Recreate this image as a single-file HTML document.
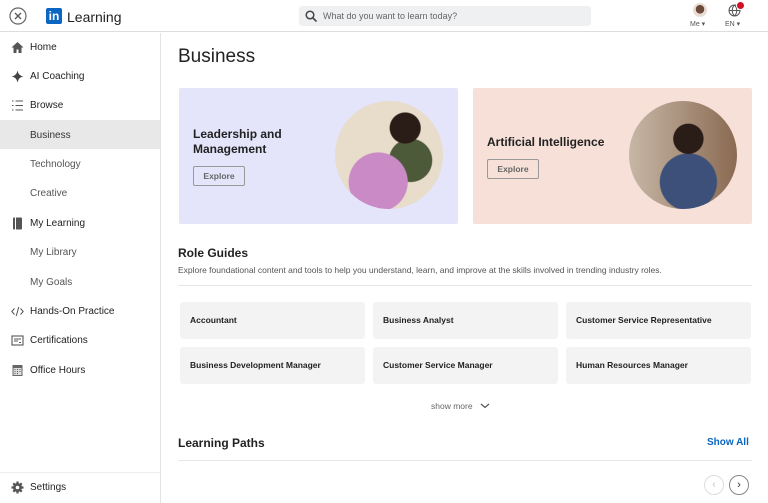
<!DOCTYPE html>
<html><head><meta charset="utf-8"><style>
*{box-sizing:border-box;margin:0;padding:0}
body{width:768px;height:503px;overflow:hidden;background:#fff;font-family:"Liberation Sans",sans-serif;color:#1f1f1f;position:relative}
.abs{position:absolute}
.hdr{left:0;top:0;width:768px;height:32px;border-bottom:1px solid #ddd}
.side{left:0;top:33px;width:161px;height:470px;border-right:1px solid #e3e3e3}
.nav{position:absolute;left:0;width:160px;height:29px;font-size:10px;line-height:31px;padding-left:30px;color:#222}
.nav.sub{color:#555}
.ic{position:absolute;left:11px;top:9px;width:13px;height:13px}
.tile{position:absolute;width:185px;height:37px;background:#f3f3f4;border-radius:3px;font-size:8.5px;font-weight:bold;line-height:37px;padding-left:10px;color:#222}
.btn{position:absolute;border:1px solid #999;border-radius:2px;font-size:8.5px;font-weight:bold;color:#666;text-align:center;line-height:18px;width:52px;height:20px}
</style></head><body>
<div class="abs hdr">
<svg class="abs" style="left:9px;top:7px" width="18" height="18" viewBox="0 0 18 18"><circle cx="9" cy="9" r="8" fill="none" stroke="#666" stroke-width="1.2"/><path d="M6 6l6 6M12 6l-6 6" stroke="#555" stroke-width="1.3"/></svg>
<div class="abs" style="left:46px;top:8px;width:16px;height:16px;background:#0a66c2;border-radius:2px;color:#fff;font-weight:bold;font-size:12px;line-height:17px;text-align:center">in</div>
<div class="abs" style="left:67px;top:9px;font-size:14px;color:#222">Learning</div>
<div class="abs" style="left:299px;top:6px;width:292px;height:20px;background:#eef0f2;border-radius:3px"></div>
<svg class="abs" style="left:305px;top:10px" width="12" height="12" viewBox="0 0 12 12"><circle cx="5" cy="5" r="3.8" fill="none" stroke="#444" stroke-width="1.5"/><path d="M8 8l3.5 3.5" stroke="#444" stroke-width="1.6"/></svg>
<div class="abs" style="left:323px;top:11px;font-size:9px;color:#666">What do you want to learn today?</div>
<div class="abs" style="left:693px;top:3px;width:14px;height:14px;border-radius:50%;background:radial-gradient(circle at 50% 45%,#6b4a3a 40%,#e9dcd3 42%)"></div>
<div class="abs" style="left:690px;top:20px;font-size:7px;color:#555">Me ▾</div>
<svg class="abs" style="left:728px;top:4px" width="13" height="13" viewBox="0 0 13 13"><circle cx="6.5" cy="6.5" r="5.5" fill="none" stroke="#555"/><path d="M1 6.5h11M6.5 1c-3 3-3 8 0 11M6.5 1c3 3 3 8 0 11" stroke="#555" fill="none"/></svg>
<div class="abs" style="left:736px;top:1px;width:9px;height:9px;border-radius:50%;background:#d11124;border:1px solid #fff"></div>
<div class="abs" style="left:725px;top:20px;font-size:7px;color:#555">EN ▾</div>
</div>
<div class="abs side"></div>
<div class="nav" style="top:32px"><svg class="ic" viewBox="0 0 13 13"><path d="M6.5 1L0.5 6.5h2V12h3V8.5h2V12h3V6.5h2z" fill="#555"/></svg>Home</div>
<div class="nav" style="top:61px"><svg class="ic" viewBox="0 0 13 13"><path d="M6.5 0.5Q7.3 5.7 12.5 6.5Q7.3 7.3 6.5 12.5Q5.7 7.3 0.5 6.5Q5.7 5.7 6.5 0.5z" fill="#444"/></svg>AI Coaching</div>
<div class="nav" style="top:90px"><svg class="ic" viewBox="0 0 13 13"><path d="M1 2h1.5M1 6.5h1.5M1 11h1.5M4.5 2H12M4.5 6.5H12M4.5 11H12" stroke="#555" stroke-width="1.1"/></svg>Browse</div>
<div class="nav sub" style="top:120px;background:#e8e8e8;color:#333">Business</div>
<div class="nav sub" style="top:149px">Technology</div>
<div class="nav sub" style="top:178px">Creative</div>
<div class="nav" style="top:208px"><svg class="ic" viewBox="0 0 13 13"><rect x="2" y="0.5" width="9" height="12" rx="1" fill="#555"/><rect x="4" y="0.5" width="1" height="12" fill="#fff"/></svg>My Learning</div>
<div class="nav sub" style="top:237px">My Library</div>
<div class="nav sub" style="top:267px">My Goals</div>
<div class="nav" style="top:296px"><svg class="ic" viewBox="0 0 13 13"><path d="M3.5 3.5L0.8 6.5l2.7 3M9.5 3.5l2.7 3-2.7 3M7.8 2L5.2 11" stroke="#555" fill="none" stroke-width="1"/></svg>Hands-On Practice</div>
<div class="nav" style="top:325px"><svg class="ic" viewBox="0 0 13 13"><rect x="1" y="2" width="11" height="9" fill="none" stroke="#555" stroke-width="1.1"/><path d="M3 5h7M3 7h4M8 8.5h2" stroke="#555"/></svg>Certifications</div>
<div class="nav" style="top:355px"><svg class="ic" viewBox="0 0 13 13"><rect x="1.5" y="1" width="10" height="11" fill="#666"/><rect x="2.5" y="4" width="8" height="7" fill="#ddd"/><path d="M3.5 5.5h1M6 5.5h1M8.5 5.5h1M3.5 7.5h1M6 7.5h1M8.5 7.5h1M3.5 9.5h1M6 9.5h1" stroke="#555"/></svg>Office Hours</div>
<div class="abs" style="left:0;top:472px;width:160px;border-top:1px solid #eee"></div>
<div class="nav" style="top:472px"><svg class="ic" viewBox="0 0 13 13"><circle cx="6.5" cy="6.5" r="4.5" fill="#555"/><path d="M6.5 0.5v12M0.5 6.5h12M2.3 2.3l8.4 8.4M10.7 2.3l-8.4 8.4" stroke="#555" stroke-width="2.2"/><circle cx="6.5" cy="6.5" r="1.8" fill="#fff"/></svg>Settings</div>

<div class="abs" style="left:178px;top:46px;font-size:19px;color:#222">Business</div>
<div class="abs" style="left:179px;top:88px;width:279px;height:136px;background:#e4e4fa;border-radius:2px"></div>
<div class="abs" style="left:193px;top:127px;font-size:12px;font-weight:bold;line-height:15px;color:#222">Leadership and<br>Management</div>
<div class="btn" style="left:193px;top:166px">Explore</div>
<div class="abs" style="left:335px;top:101px;width:108px;height:108px;border-radius:50%;background:radial-gradient(circle at 65% 25%,#2a1c16 14%,transparent 15%),radial-gradient(circle at 40% 75%,#c98ac6 28%,transparent 29%),radial-gradient(circle at 70% 55%,#4d5a3a 22%,transparent 23%),#e8dccb"></div>
<div class="abs" style="left:473px;top:88px;width:279px;height:136px;background:#f6e0d8;border-radius:2px"></div>
<div class="abs" style="left:487px;top:135px;font-size:12px;font-weight:bold;color:#222">Artificial Intelligence</div>
<div class="btn" style="left:487px;top:159px">Explore</div>
<div class="abs" style="left:629px;top:101px;width:108px;height:108px;border-radius:50%;background:radial-gradient(circle at 55% 35%,#2a1d18 16%,transparent 17%),radial-gradient(circle at 55% 75%,#3c5079 28%,transparent 29%),linear-gradient(90deg,#c7b7a6,#8a6a52)"></div>

<div class="abs" style="left:178px;top:246px;font-size:12px;font-weight:bold;color:#222">Role Guides</div>
<div class="abs" style="left:178px;top:265px;font-size:8.5px;color:#555">Explore foundational content and tools to help you understand, learn, and improve at the skills involved in trending industry roles.</div>
<div class="abs" style="left:178px;top:285px;width:574px;border-top:1px solid #e6e6e6"></div>
<div class="tile" style="left:180px;top:302px">Accountant</div>
<div class="tile" style="left:373px;top:302px">Business Analyst</div>
<div class="tile" style="left:566px;top:302px">Customer Service Representative</div>
<div class="tile" style="left:180px;top:347px">Business Development Manager</div>
<div class="tile" style="left:373px;top:347px">Customer Service Manager</div>
<div class="tile" style="left:566px;top:347px">Human Resources Manager</div>
<div class="abs" style="left:431px;top:401px;font-size:8.5px;color:#666">show more</div>
<svg class="abs" style="left:480px;top:403px" width="10" height="6" viewBox="0 0 10 6"><path d="M1 1l4 3.5L9 1" stroke="#555" fill="none" stroke-width="1.2"/></svg>
<div class="abs" style="left:178px;top:436px;font-size:12px;font-weight:bold;color:#222">Learning Paths</div>
<div class="abs" style="left:707px;top:437px;font-size:10px;font-weight:bold;color:#0a66c2">Show All</div>
<div class="abs" style="left:178px;top:460px;width:574px;border-top:1px solid #e6e6e6"></div>
<div class="abs" style="left:704px;top:475px;width:20px;height:20px;border-radius:50%;border:1px solid #ddd;color:#bbb;font-size:10px;text-align:center;line-height:18px">‹</div>
<div class="abs" style="left:729px;top:475px;width:20px;height:20px;border-radius:50%;border:1px solid #888;color:#333;font-size:11px;text-align:center;line-height:18px">›</div>
</body></html>
